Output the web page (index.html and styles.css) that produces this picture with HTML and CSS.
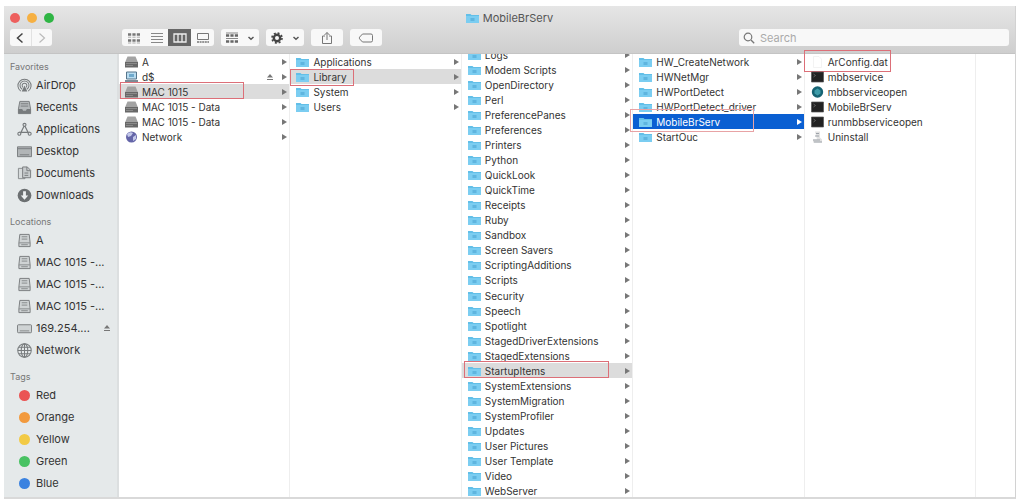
FILE: index.html
```
<!DOCTYPE html>
<html lang="en">
<head>
  <meta charset="UTF-8">
  <title>MobileBrServ</title>
  <link rel="stylesheet" href="styles.css">
</head>
<body>

<!-- Icons -->
<svg class="sprite" aria-hidden="true">
  <symbol id="folder" viewBox="0 0 13 11">
    <path d="M0 1.5h4.5l1 1H13V10.500H0z" fill="#62bfe8"/>
    <path d="M0 3.500h13v7H0z" fill="#7bcdf1"/>
    <path d="M4.500 5.500h4v3h-4z" fill="#5fb5df"/>
  </symbol>
  <symbol id="disk" viewBox="0 0 13 12">
    <path d="M2.500 0.500h8L13 6.500H0z" fill="#a3a3a3"/>
    <path d="M0 6h13v5.500H0z" fill="#686868"/>
    <path d="M1 7.500h11M1 9.500h7" stroke="#999" stroke-width=".7"/>
  </symbol>
  <symbol id="server" viewBox="0 0 13 12">
    <path d="M1.500 1h10v7h-10z" fill="#b9dcf0" stroke="#56758b"/>
    <path d="M4 3h5v3H4z" fill="#6fa9cc"/>
    <path d="M0 9h13v2H0z" fill="#7d8d98"/>
  </symbol>
  <symbol id="globe" viewBox="0 0 13 12">
    <circle cx="6.500" cy="6" r="5.500" fill="#6465a8"/>
    <path d="M2 3q3-3 6-1L6 5 3 6zM8 6l3-2v4L8 10z" fill="#c3c8ea"/>
  </symbol>
  <symbol id="terminal" viewBox="0 0 13 12">
    <path d="M.5 1h12v10H.5z" fill="#222" stroke="#555" stroke-width=".7"/>
    <path d="M2.500 3l2 1.500-2 1.500" fill="none" stroke="#777" stroke-width=".7"/>
  </symbol>
  <symbol id="app" viewBox="0 0 13 12">
    <circle cx="6.500" cy="6" r="5.700" fill="#176373"/>
    <path d="M6.500 2.500l3 2v3l-3 2-3-2v-3z" fill="#3e9ca9"/>
  </symbol>
  <symbol id="file" viewBox="0 0 13 12">
    <path d="M2.500.5h5.500l2.500 2.500v8.500h-8z" fill="#fff" stroke="#eee" stroke-width=".7"/>
  </symbol>
  <symbol id="script" viewBox="0 0 13 12">
    <path d="M4 .5h5v6l2 2v3H2v-3h4z" fill="#e2e2e2"/>
    <path d="M5 2.500h3M4 5h4M2 9h7M3 11h8" stroke="#949ba3" stroke-width=".9"/>
  </symbol>
  <symbol id="airdrop" viewBox="0 0 16 16">
    <g fill="none" stroke="#777b7d" stroke-width="1.100">
      <path d="M4 14a7 7 0 1 1 8 0M5.500 12a4.800 4.800 0 1 1 5 0M6.500 10a2.500 2.500 0 1 1 3 0"/>
    </g>
    <path d="M8 8l3 6.500H5z" fill="#777b7d"/>
  </symbol>
  <symbol id="recents" viewBox="0 0 16 16">
    <path d="M3 1.500h10l1.500 8v5h-13v-5z" fill="#b5b9bb" stroke="#777b7d"/>
    <path d="M4 4h8M4 6.500h8" stroke="#777b7d"/>
    <path d="M1.500 9.500h4l1 2h3l1-2h4v5h-13z" fill="#777b7d"/>
  </symbol>
  <symbol id="apps" viewBox="0 0 16 16">
    <path d="M8 3.500L3.500 12.500M8 3.500l4.500 9M2 11h12" fill="none" stroke="#777b7d" stroke-width="1.300"/>
    <g fill="#e5e9ea" stroke="#777b7d" stroke-width="1.200"><circle cx="8" cy="3" r="1.600"/><circle cx="2.500" cy="12.500" r="1.600"/><circle cx="13.500" cy="12.500" r="1.600"/></g>
  </symbol>
  <symbol id="desktop" viewBox="0 0 16 16">
    <path d="M.5 3h15v10.500H.5z" fill="#b1b5b7" stroke="#777b7d"/>
    <path d="M1 5h14M3 11.500h10" stroke="#777b7d"/>
  </symbol>
  <symbol id="documents" viewBox="0 0 16 16">
    <path d="M1.500 2.500h7v11h-7z" fill="#d7dbdc" stroke="#85898b"/>
    <path d="M6 1h5l3.500 3.500v8H6z" fill="#c7cbcd" stroke="#777b7d"/>
    <path d="M10.500 1v4H14M8 7.500h4M8 10h4" fill="none" stroke="#777b7d"/>
  </symbol>
  <symbol id="downloads" viewBox="0 0 16 16">
    <circle cx="8" cy="8" r="7.300" fill="#6c7072"/>
    <path d="M6.500 3.500h3V8h2.500l-4 4.500L4 8h2.500z" fill="#eef1f2"/>
  </symbol>
  <symbol id="drive" viewBox="0 0 16 16">
    <path d="M3 1.500h10l1 9v4H2v-4z" fill="#cfd3d4" stroke="#777b7d"/>
    <path d="M2 10.500h12M4.500 12.500h7M5 4h6M5 6.500h6" fill="none" stroke="#85898b"/>
  </symbol>
  <symbol id="display" viewBox="0 0 16 16">
    <rect x=".5" y="4" width="15" height="8.500" rx="1" fill="#cfd3d4" stroke="#777b7d"/>
    <path d="M3 10.500h10" stroke="#85898b"/>
  </symbol>
  <symbol id="network" viewBox="0 0 16 16">
    <g fill="none" stroke="#777b7d" stroke-width="1.100">
      <circle cx="8" cy="8" r="7.200"/><ellipse cx="8" cy="8" rx="3.500" ry="7.200"/>
      <path d="M1 8h14M8 1v14M2 4.500h12M2 11.500h12"/>
    </g>
  </symbol>
  <symbol id="eject" viewBox="0 0 8 8">
    <path d="M4 1l3 3.500H1zM1 6h6v1H1z" fill="#777"/>
  </symbol>
  <symbol id="down" viewBox="0 0 8 8">
    <path d="M1.500 3L4 5.200 6.500 3" fill="none" stroke="#555" stroke-width="1.500"/>
  </symbol>
</svg>

<div class="window">
  <header class="header">
    <div class="titlebar">
      <div class="lights">
        <button class="light close" aria-label="Close"></button>
        <button class="light minimize" aria-label="Minimize"></button>
        <button class="light zoom" aria-label="Zoom"></button>
      </div>
      <h1 class="title"><svg class="icon"><use href="#folder"/></svg>MobileBrServ</h1>
    </div>
    <div class="toolbar">
      <div class="group nav">
        <button aria-label="Back"><svg width="10" height="14" viewBox="0 0 10 14"><path d="M7.500 2.500L2.500 7l5 4.500" fill="none" stroke="#444" stroke-width="1.500"/></svg></button>
        <button aria-label="Forward"><svg width="10" height="14" viewBox="0 0 10 14"><path d="M2.500 2.500l5 4.500-5 4.500" fill="none" stroke="#bbb" stroke-width="1.200"/></svg></button>
      </div>
      <div class="group views">
        <button aria-label="Icons"><svg width="14" height="12" viewBox="0 0 14 12"><path d="M1 2.500h12M1 8.500h12" stroke="#777" stroke-width="2.500" stroke-dasharray="3.200 1.200"/><path d="M1 5.200h12M1 11h12" stroke="#999" stroke-width=".8" stroke-dasharray="3.200 1.200"/></svg></button>
        <button aria-label="List"><svg width="14" height="12" viewBox="0 0 14 12"><path d="M1 1.500h12M1 4.500h12M1 7.500h12M1 10.500h12" stroke="#888"/></svg></button>
        <button class="active" aria-label="Columns"><svg width="14" height="12" viewBox="0 0 14 12"><path d="M1 2h12v8H1zM5 2v8M9 2v8" fill="none" stroke="#eee" stroke-width="1.300"/></svg></button>
        <button aria-label="Gallery"><svg width="14" height="12" viewBox="0 0 14 12"><path d="M1.500 1.500h11v6h-11z" fill="none" stroke="#777"/><path d="M1 10h12" stroke="#777" stroke-width="1.500" stroke-dasharray="2 .6"/></svg></button>
      </div>
      <button class="group arrange" aria-label="Arrange"><svg width="14" height="12" viewBox="0 0 14 12"><path d="M1 1h12M1 6.500h12" stroke="#888" stroke-width="1"/><path d="M1 3.500h12M1 9.500h12" stroke="#666" stroke-width="2.500" stroke-dasharray="3.200 1.200"/></svg><svg width="8" height="8"><use href="#down"/></svg></button>
      <button class="group action" aria-label="Action"><svg width="14" height="14" viewBox="0 0 14 14"><circle cx="7" cy="7" r="3.200" fill="none" stroke="#444" stroke-width="2.400"/><circle cx="7" cy="7" r="5" fill="none" stroke="#444" stroke-width="1.600" stroke-dasharray="2 1.930"/></svg><svg width="8" height="8"><use href="#down"/></svg></button>
      <button class="group share" aria-label="Share"><svg width="12" height="14" viewBox="0 0 12 14"><path d="M4 5H1.500v7.500h9V5H8M6 9V1.500M3.500 4L6 1.500 8.500 4" fill="none" stroke="#777"/></svg></button>
      <button class="group tag" aria-label="Edit tags"><svg width="16" height="12" viewBox="0 0 16 12"><path d="M4.500 2h8.500q1.500 0 1.500 1.500v5q0 1.500-1.500 1.500H4.500L1.500 6.800V5.200z" fill="none" stroke="#777"/></svg></button>
      <label class="search">
        <svg width="12" height="12" viewBox="0 0 12 12"><circle cx="5" cy="5" r="3.800" fill="none" stroke="#777" stroke-width="1.200"/><path d="M8 8l3.200 3.200" stroke="#777" stroke-width="1.300"/></svg>
        <input type="search" placeholder="Search" aria-label="Search">
      </label>
    </div>
  </header>

  <main class="browser">
    <nav class="sidebar">
      <h2>Favorites</h2>
      <a href="#"><svg><use href="#airdrop"/></svg>AirDrop</a>
      <a href="#"><svg><use href="#recents"/></svg>Recents</a>
      <a href="#"><svg><use href="#apps"/></svg>Applications</a>
      <a href="#"><svg><use href="#desktop"/></svg>Desktop</a>
      <a href="#"><svg><use href="#documents"/></svg>Documents</a>
      <a href="#"><svg><use href="#downloads"/></svg>Downloads</a>
      <h2>Locations</h2>
      <a href="#"><svg><use href="#drive"/></svg>A</a>
      <a href="#"><svg><use href="#drive"/></svg>MAC 1015 -...</a>
      <a href="#"><svg><use href="#drive"/></svg>MAC 1015 -...</a>
      <a href="#"><svg><use href="#drive"/></svg>MAC 1015 -...</a>
      <a href="#"><svg><use href="#display"/></svg>169.254....<svg class="eject"><use href="#eject"/></svg></a>
      <a href="#"><svg><use href="#network"/></svg>Network</a>
      <h2>Tags</h2>
      <a href="#"><i class="dot red"></i>Red</a>
      <a href="#"><i class="dot orange"></i>Orange</a>
      <a href="#"><i class="dot yellow"></i>Yellow</a>
      <a href="#"><i class="dot green"></i>Green</a>
      <a href="#"><i class="dot blue"></i>Blue</a>
    </nav>

    <div class="column">
      <a class="row dir" href="#"><svg class="icon"><use href="#disk"/></svg>A</a>
      <a class="row dir" href="#"><svg class="icon"><use href="#server"/></svg>d$<svg class="eject"><use href="#eject"/></svg></a>
      <a class="row dir open" href="#"><svg class="icon"><use href="#disk"/></svg>MAC 1015<span class="mark mark-disk"></span></a>
      <a class="row dir" href="#"><svg class="icon"><use href="#disk"/></svg>MAC 1015 - Data</a>
      <a class="row dir" href="#"><svg class="icon"><use href="#disk"/></svg>MAC 1015 - Data</a>
      <a class="row dir" href="#"><svg class="icon"><use href="#globe"/></svg>Network</a>
    </div>

    <div class="column">
      <a class="row dir" href="#"><svg class="icon"><use href="#folder"/></svg>Applications</a>
      <a class="row dir open" href="#"><svg class="icon"><use href="#folder"/></svg>Library<span class="mark mark-library"></span></a>
      <a class="row dir" href="#"><svg class="icon"><use href="#folder"/></svg>System</a>
      <a class="row dir" href="#"><svg class="icon"><use href="#folder"/></svg>Users</a>
    </div>

    <div class="column scrolled">
      <div class="list">
        <a class="row dir" href="#"><svg class="icon"><use href="#folder"/></svg>Logs</a>
        <a class="row dir" href="#"><svg class="icon"><use href="#folder"/></svg>Modem Scripts</a>
        <a class="row dir" href="#"><svg class="icon"><use href="#folder"/></svg>OpenDirectory</a>
        <a class="row dir" href="#"><svg class="icon"><use href="#folder"/></svg>Perl</a>
        <a class="row dir" href="#"><svg class="icon"><use href="#folder"/></svg>PreferencePanes</a>
        <a class="row dir" href="#"><svg class="icon"><use href="#folder"/></svg>Preferences</a>
        <a class="row dir" href="#"><svg class="icon"><use href="#folder"/></svg>Printers</a>
        <a class="row dir" href="#"><svg class="icon"><use href="#folder"/></svg>Python</a>
        <a class="row dir" href="#"><svg class="icon"><use href="#folder"/></svg>QuickLook</a>
        <a class="row dir" href="#"><svg class="icon"><use href="#folder"/></svg>QuickTime</a>
        <a class="row dir" href="#"><svg class="icon"><use href="#folder"/></svg>Receipts</a>
        <a class="row dir" href="#"><svg class="icon"><use href="#folder"/></svg>Ruby</a>
        <a class="row dir" href="#"><svg class="icon"><use href="#folder"/></svg>Sandbox</a>
        <a class="row dir" href="#"><svg class="icon"><use href="#folder"/></svg>Screen Savers</a>
        <a class="row dir" href="#"><svg class="icon"><use href="#folder"/></svg>ScriptingAdditions</a>
        <a class="row dir" href="#"><svg class="icon"><use href="#folder"/></svg>Scripts</a>
        <a class="row dir" href="#"><svg class="icon"><use href="#folder"/></svg>Security</a>
        <a class="row dir" href="#"><svg class="icon"><use href="#folder"/></svg>Speech</a>
        <a class="row dir" href="#"><svg class="icon"><use href="#folder"/></svg>Spotlight</a>
        <a class="row dir" href="#"><svg class="icon"><use href="#folder"/></svg>StagedDriverExtensions</a>
        <a class="row dir" href="#"><svg class="icon"><use href="#folder"/></svg>StagedExtensions</a>
        <a class="row dir open" href="#"><svg class="icon"><use href="#folder"/></svg>StartupItems<span class="mark mark-startup"></span></a>
        <a class="row dir" href="#"><svg class="icon"><use href="#folder"/></svg>SystemExtensions</a>
        <a class="row dir" href="#"><svg class="icon"><use href="#folder"/></svg>SystemMigration</a>
        <a class="row dir" href="#"><svg class="icon"><use href="#folder"/></svg>SystemProfiler</a>
        <a class="row dir" href="#"><svg class="icon"><use href="#folder"/></svg>Updates</a>
        <a class="row dir" href="#"><svg class="icon"><use href="#folder"/></svg>User Pictures</a>
        <a class="row dir" href="#"><svg class="icon"><use href="#folder"/></svg>User Template</a>
        <a class="row dir" href="#"><svg class="icon"><use href="#folder"/></svg>Video</a>
        <a class="row dir" href="#"><svg class="icon"><use href="#folder"/></svg>WebServer</a>
      </div>
    </div>

    <div class="column">
      <a class="row dir" href="#"><svg class="icon"><use href="#folder"/></svg>HW_CreateNetwork</a>
      <a class="row dir" href="#"><svg class="icon"><use href="#folder"/></svg>HWNetMgr</a>
      <a class="row dir" href="#"><svg class="icon"><use href="#folder"/></svg>HWPortDetect</a>
      <a class="row dir" href="#"><svg class="icon"><use href="#folder"/></svg>HWPortDetect_driver</a>
      <a class="row dir selected" href="#"><svg class="icon"><use href="#folder"/></svg>MobileBrServ<span class="mark mark-serv"></span></a>
      <a class="row dir" href="#"><svg class="icon"><use href="#folder"/></svg>StartOuc</a>
    </div>

    <div class="column">
      <a class="row" href="#"><svg class="icon"><use href="#file"/></svg>ArConfig.dat<span class="mark mark-config"></span></a>
      <a class="row" href="#"><svg class="icon"><use href="#terminal"/></svg>mbbservice</a>
      <a class="row" href="#"><svg class="icon"><use href="#app"/></svg>mbbserviceopen</a>
      <a class="row" href="#"><svg class="icon"><use href="#terminal"/></svg>MobileBrServ</a>
      <a class="row" href="#"><svg class="icon"><use href="#terminal"/></svg>runmbbserviceopen</a>
      <a class="row" href="#"><svg class="icon"><use href="#script"/></svg>Uninstall</a>
    </div>

    <div class="column"></div>
  </main>
</div>

</body>
</html>
```
FILE: styles.css
```
* {
  box-sizing: border-box;
}

body {
  margin: 0;
  height: 100vh;
  padding: 6px 1px 2px 4px;
  background: #fff;
  color: #333;
  font-family: Inter, "Liberation Sans", sans-serif;
  font-size: 10px;
}

a {
  color: inherit;
  text-decoration: none;
}

button {
  padding: 0;
  border: 0;
  background: none;
}

h1, h2 {
  margin: 0;
  font-weight: 400;
}

.sprite {
  display: none;
}

.window {
  display: flex;
  flex-direction: column;
  height: 100%;
  border-right: 1px solid #d2d2d2;
  border-bottom: 2px solid #d9d9d9;
}

/* Header */
.header {
  flex: none;
  height: 48px;
  padding: 0 6px;
  background: linear-gradient(#e6e6e6, #cecece);
  border-bottom: 1px solid #c4c4c4;
}

.titlebar {
  display: grid;
  grid-template-columns: 1fr auto 1fr;
  align-items: center;
  height: 23px;
}

.lights {
  display: flex;
  gap: 7px;
}

.light {
  width: 10px;
  height: 10px;
  border-radius: 50%;
}

.close { background: #ed5f5d; }
.minimize { background: #f6b042; }
.zoom { background: #2fb544; }

.title {
  display: flex;
  align-items: center;
  gap: 4px;
  font-size: 11px;
  color: #555;
}

.icon {
  flex: none;
  width: 13px;
  height: 12px;
}

.toolbar {
  display: flex;
  height: 17px;
}

.group {
  display: flex;
  align-items: center;
  justify-content: center;
  gap: 8px;
  margin-right: 7px;
  border-radius: 3px;
  background: #f8f8f8;
}

.group button {
  display: flex;
  flex: 1;
  align-items: center;
  justify-content: center;
  height: 100%;
}

.nav {
  width: 42px;
  margin-right: 70px;
}

.nav, .views {
  gap: 0;
}

.nav button + button {
  border-left: 1px solid #e2e2e2;
}

.views {
  width: 92px;
}

.views .active {
  background: #666;
}

.arrange, .action {
  width: 38px;
}

.share, .tag {
  width: 32px;
}

.search {
  display: flex;
  align-items: center;
  gap: 5px;
  width: 270px;
  margin-left: auto;
  padding: 0 4px;
  border-radius: 3px;
  background: #f8f8f8;
}

.search input {
  flex: 1;
  min-width: 0;
  padding: 0;
  border: 0;
  outline: 0;
  background: none;
  font: inherit;
  font-size: 11px;
}

.search input::placeholder {
  color: #aaa;
}

/* Columns */
.browser {
  display: grid;
  grid-template-columns: 115px repeat(5, 172fr) 39fr;
  flex: 1;
  min-height: 0;
}

.sidebar {
  padding: 6px 6px 0;
  background: #e5e9ea;
  border-right: 2px solid #dcdfe0;
  font-size: 11px;
  white-space: nowrap;
}

.sidebar h2 {
  margin-top: 9px;
  font-size: 9px;
  line-height: 14px;
  color: #777;
}

.sidebar h2:first-child {
  margin-top: 0;
}

.sidebar a {
  display: flex;
  align-items: center;
  gap: 4px;
  height: 22px;
  padding-left: 7px;
}

.sidebar svg {
  flex: none;
  width: 15px;
  height: 15px;
}

.sidebar .eject, .eject {
  width: 8px;
  height: 8px;
  margin-left: auto;
}

.dot {
  width: 11px;
  height: 11px;
  margin: 0 2px;
  border-radius: 50%;
}

.red { background: #ea5454; }
.orange { background: #f29a3e; }
.yellow { background: #f2ca45; }
.green { background: #48c263; }
.blue { background: #3b82e0; }

.column {
  min-width: 0;
  min-height: 0;
  border-right: 1px solid #eee;
}

.column:last-child {
  border-right: 0;
}

.scrolled {
  overflow: hidden;
}

/* the list is scrolled part of a row past the top edge */
.list {
  display: flex;
  flex-direction: column;
  justify-content: space-between;
  height: calc(100% + 9px);
  margin-top: -7px;
}

.row {
  position: relative;
  display: flex;
  align-items: center;
  gap: 4px;
  height: 15px;
  padding: 0 2px 0 6px;
  white-space: nowrap;
}

.dir::after {
  content: "";
  margin-left: auto;
  border-left: 5px solid #777;
  border-top: 3px solid transparent;
  border-bottom: 3px solid transparent;
}

.row .eject + *, .row:has(.eject)::after {
  margin-left: 4px;
}

.open {
  background: #dcdcdc;
}

.selected {
  background: #0a5fd2;
  color: #fff;
}

.selected::after {
  border-left-color: #fff;
}

/* Red outlines */
.mark {
  position: absolute;
  border: 1px solid #dc6f78;
}

.mark-disk {
  top: -2px;
  left: 1px;
  width: 124px;
  height: 17px;
}

.mark-library {
  top: 0;
  left: 0;
  width: 64px;
  height: 17px;
}

.mark-startup {
  top: -2px;
  left: 2px;
  width: 145px;
  height: 17px;
}

.mark-serv {
  top: -5px;
  left: -3px;
  width: 124px;
  height: 23px;
  border-color: #e8a3a5;
}

.mark-config {
  top: -4px;
  left: -1px;
  width: 87px;
  height: 22px;
}
```
